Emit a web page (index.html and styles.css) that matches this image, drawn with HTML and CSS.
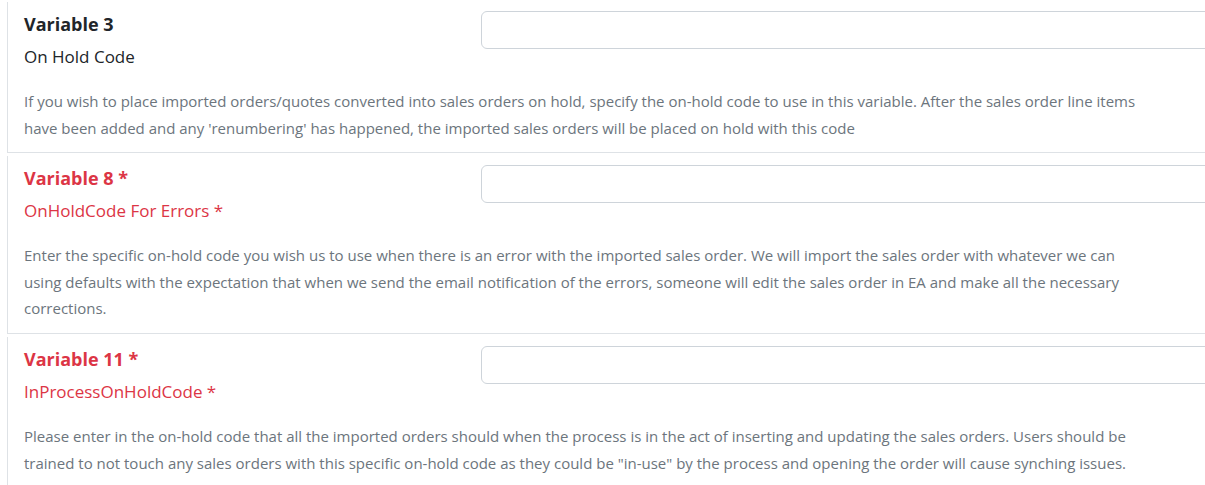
FILE: index.html
```html
<!DOCTYPE html>
<html>
<head>
<meta charset="utf-8">
<link rel="stylesheet" href="styles.css">
</head>
<body>
<div class="list">
  <div class="card">
    <div class="head">
      <div class="labels">
        <div class="title">Variable 3</div>
        <div class="sub">On Hold Code</div>
      </div>
      <input class="field" type="text">
    </div>
    <p class="desc">If you wish to place imported orders/quotes converted into sales orders on hold, specify the on-hold code to use in this variable. After the sales order line items have been added and any 'renumbering' has happened, the imported sales orders will be placed on hold with this code</p>
  </div>
  <div class="card required">
    <div class="head">
      <div class="labels">
        <div class="title">Variable 8 *</div>
        <div class="sub">OnHoldCode For Errors *</div>
      </div>
      <input class="field" type="text">
    </div>
    <p class="desc">Enter the specific on-hold code you wish us to use when there is an error with the imported sales order. We will import the sales order with whatever we can using defaults with the expectation that when we send the email notification of the errors, someone will edit the sales order in EA and make all the necessary corrections.</p>
  </div>
  <div class="card required">
    <div class="head">
      <div class="labels">
        <div class="title">Variable 11 *</div>
        <div class="sub">InProcessOnHoldCode *</div>
      </div>
      <input class="field" type="text">
    </div>
    <p class="desc">Please enter in the on-hold code that all the imported orders should when the process is in the act of inserting and updating the sales orders. Users should be trained to not touch any sales orders with this specific on-hold code as they could be "in-use" by the process and opening the order will cause synching issues.</p>
  </div>
</div>
</body>
</html>
```

FILE: styles.css
```css
html, body {
  margin: 0;
  padding: 0;
  background: #ffffff;
  overflow: hidden;
}
body {
  font-family: "Open Sans", "Noto Sans", sans-serif;
  color: #212529;
}
.list {
  width: 1300px;
  padding: 2px 0 0 7px;
}
.card {
  border-left: 1px solid #dee2e6;
  border-bottom: 1px solid #dee2e6;
  padding: 9px 0 11px 16px;
  margin-bottom: 3px;
}
.head {
  display: grid;
  grid-template-columns: 457px 1fr;
}
.labels {
  display: flex;
  flex-direction: column;
}
.title {
  font-size: 18px;
  font-weight: 700;
  line-height: 26px;
}
.sub {
  font-size: 17px;
  line-height: 26px;
  margin-top: 7px;
}
.required .title,
.required .sub {
  color: #dc3545;
}
.field {
  height: 38px;
  box-sizing: border-box;
  border: 1px solid #ced4da;
  border-radius: 6px;
  background: #fff;
  margin: 0;
  padding: 6px 12px;
  font: inherit;
}
.desc {
  margin: 18px 0 0 0;
  max-width: 1118px;
  font-size: 15px;
  line-height: 26.6px;
  color: #6c757d;
}
```
